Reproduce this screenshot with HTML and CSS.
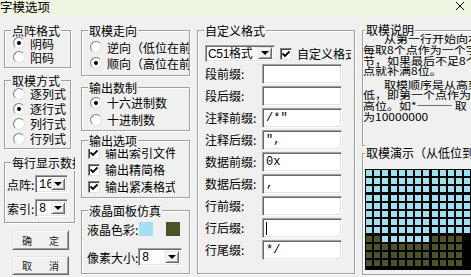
FILE: index.html
```html
<!DOCTYPE html>
<html lang="zh-CN">
<head>
  <meta charset="UTF-8" />
  <title>字模选项</title>
  <link rel="stylesheet" href="styles.css">
</head>
<body>

<div class="titlebar">
  <span class="title">字模选项</span>
  <svg class="close" width="8" height="8" viewBox="0 0 8 8">
    <path d="M0 0 L8 8 M8 0 L0 8" stroke="#000" stroke-width="1"/>
  </svg>
</div>

<div class="dialog">

  <!-- Column 1 -->
  <div class="col col-1">
    <div class="grp grp-dot">
      <span class="grp-title">点阵格式</span>
      <div class="opts">
        <div class="opt"><span class="radio on"></span>阴码</div>
        <div class="opt"><span class="radio"></span>阳码</div>
      </div>
    </div>

    <div class="grp grp-scan">
      <span class="grp-title">取模方式</span>
      <div class="opts">
        <div class="opt"><span class="radio"></span>逐列式</div>
        <div class="opt"><span class="radio on"></span>逐行式</div>
        <div class="opt"><span class="radio"></span>列行式</div>
        <div class="opt"><span class="radio"></span>行列式</div>
      </div>
    </div>

    <div class="grp grp-perline">
      <span class="grp-title">每行显示数据</span>
      <div class="pick-row">
        <span class="pick-label">点阵:</span>
        <div class="combo combo-small"><span class="combo-val">16</span><span class="combo-btn"><span class="arrow"></span></span></div>
      </div>
      <div class="pick-row">
        <span class="pick-label">索引:</span>
        <div class="combo combo-small"><span class="combo-val">8</span><span class="combo-btn"><span class="arrow"></span></span></div>
      </div>
    </div>

    <button class="btn btn-ok"><span>确</span><span>定</span></button>
    <button class="btn btn-cancel"><span>取</span><span>消</span></button>
  </div>

  <!-- Column 2 -->
  <div class="col col-2">
    <div class="grp grp-dir">
      <span class="grp-title">取模走向</span>
      <div class="opts">
        <div class="opt"><span class="radio"></span>逆向（低位在前）</div>
        <div class="opt"><span class="radio on"></span>顺向（高位在前）</div>
      </div>
    </div>

    <div class="grp grp-radix">
      <span class="grp-title">输出数制</span>
      <div class="opts">
        <div class="opt"><span class="radio on"></span>十六进制数</div>
        <div class="opt"><span class="radio"></span>十进制数</div>
      </div>
    </div>

    <div class="grp grp-out">
      <span class="grp-title">输出选项</span>
      <div class="opts">
        <div class="opt"><span class="check"><svg width="8" height="8" viewBox="0 0 8 8"><path d="M0.5 3.5 L3 6 L7.5 1.5" fill="none" stroke="#000" stroke-width="1.8"/></svg></span>输出索引文件</div>
        <div class="opt"><span class="check"><svg width="8" height="8" viewBox="0 0 8 8"><path d="M0.5 3.5 L3 6 L7.5 1.5" fill="none" stroke="#000" stroke-width="1.8"/></svg></span>输出精简格</div>
        <div class="opt"><span class="check"><svg width="8" height="8" viewBox="0 0 8 8"><path d="M0.5 3.5 L3 6 L7.5 1.5" fill="none" stroke="#000" stroke-width="1.8"/></svg></span>输出紧凑格式</div>
      </div>
    </div>

    <div class="grp grp-lcd">
      <span class="grp-title">液晶面板仿真</span>
      <div class="lcd-row lcd-colors">
        <span class="lcd-label">液晶色彩:</span>
        <span class="swatch swatch-on"></span>
        <span class="swatch swatch-off"></span>
      </div>
      <div class="lcd-row lcd-size">
        <span class="lcd-label">像素大小:</span>
        <div class="combo combo-size"><span class="combo-val">8</span><span class="combo-btn"><span class="arrow"></span></span></div>
      </div>
    </div>
  </div>

  <!-- Column 3 -->
  <div class="col col-3">
    <div class="grp grp-fmt">
      <span class="grp-title">自定义格式</span>
      <div class="fmt-top">
        <div class="combo combo-fmt"><span class="combo-val">C51格式</span><span class="combo-btn"><span class="arrow"></span></span></div>
        <div class="fmt-check"><span class="check"><svg width="8" height="8" viewBox="0 0 8 8"><path d="M0.5 3.5 L3 6 L7.5 1.5" fill="none" stroke="#000" stroke-width="1.8"/></svg></span>自定义格式</div>
      </div>
      <div class="fmt-row"><span class="fmt-label">段前缀:</span><span class="field"></span></div>
      <div class="fmt-row"><span class="fmt-label">段后缀:</span><span class="field"></span></div>
      <div class="fmt-row"><span class="fmt-label">注释前缀:</span><span class="field">/*"</span></div>
      <div class="fmt-row"><span class="fmt-label">注释后缀:</span><span class="field">",</span></div>
      <div class="fmt-row"><span class="fmt-label">数据前缀:</span><span class="field">0x</span></div>
      <div class="fmt-row"><span class="fmt-label">数据后缀:</span><span class="field">,</span></div>
      <div class="fmt-row"><span class="fmt-label">行前缀:</span><span class="field"></span></div>
      <div class="fmt-row"><span class="fmt-label">行后缀:</span><span class="field"><span class="caret"></span></span></div>
      <div class="fmt-row"><span class="fmt-label">行尾缀:</span><span class="field">*/</span></div>
    </div>
  </div>

  <!-- Column 4 -->
  <div class="col col-4">
    <div class="grp grp-desc">
      <span class="grp-title">取模说明</span>
      <div class="desc">
        <p>从第一行开始向右<br>每取8个点作为一个字<br>节，如果最后不足8个<br>点就补满8位。</p>
        <p>取模顺序是从高到<br>低，即第一个点作为最<br>高位。如*<span class="dash">———</span>取<br>为10000000</p>
      </div>
    </div>

    <div class="grp grp-demo">
      <span class="grp-title">取模演示（从低位到高位）</span>
      <div class="lcd" id="lcd-grid"></div>
    </div>
  </div>

</div>

<script>
  // Build the LCD preview grid from a row pattern
  // b = lit pixel, d = dark pixel, k = outside the panel
  const pattern = [];
  for (let i = 0; i < 8; i++) pattern.push("bbbbbbbbbbbbb");
  pattern.push("ddbbbbbbddddk");
  for (let i = 0; i < 3; i++) pattern.push("ddddddddddddk");

  const grid = document.getElementById("lcd-grid");
  const kinds = { b: "on", d: "off", k: "none" };

  pattern.forEach(row => {
    [...row].forEach(ch => {
      const cell = document.createElement("span");
      cell.className = "cell " + kinds[ch];
      grid.appendChild(cell);
    });
  });
</script>

</body>
</html>
```

FILE: styles.css
```css
/* Reset */
* {
  box-sizing: border-box;
  margin: 0;
  padding: 0;
}

body {
  font-family: "Noto Sans CJK SC", "Noto Sans", sans-serif;
  font-size: 12px;
  color: #000;
  background-color: #f0f0f0;
  width: 471px;
  height: 277px;
  overflow: hidden;
}

/* Title bar */
.titlebar {
  height: 17px;
  background-color: #eef5e2;
  display: flex;
  justify-content: space-between;
  align-items: flex-start;
}

.titlebar .title {
  font-size: 12.5px;
  line-height: 14px;
}

.titlebar .close {
  margin: 2px 7px 0 0;
}

/* Layout */
.dialog {
  display: flex;
  align-items: flex-start;
  padding: 13px 0 0 4px;
}

.col {
  display: flex;
  flex-direction: column;
  align-items: flex-start;
  flex: none;
}

.col-1 {
  width: 71px;
}

.col-2 {
  width: 109px;
  margin-left: 6px;
}

.col-3 {
  width: 158px;
  margin-left: 7px;
}

.col-4 {
  width: 130px;
  margin-left: 7px;
}

/* Group boxes (etched frame) */
.grp {
  position: relative;
  flex: none;
  border: 1px solid #a0a0a0;
  box-shadow: inset 1px 1px 0 #fff, 1px 1px 0 #fff;
}

.grp-title {
  position: absolute;
  top: -8px;
  left: 6px;
  padding: 0 1px;
  line-height: 16px;
  background-color: #f0f0f0;
  white-space: nowrap;
}

.opts {
  overflow: hidden;
}

.opt {
  display: flex;
  align-items: center;
  gap: 5px;
  white-space: nowrap;
}

/* Radio and check boxes */
.radio {
  position: relative;
  flex: none;
  width: 12px;
  height: 12px;
  border-radius: 50%;
  border: 1px solid;
  border-color: #808080 #e3e3e3 #e3e3e3 #808080;
  background-color: #fff;
}

.radio.on::after {
  content: "";
  position: absolute;
  left: 3px;
  top: 3px;
  width: 4px;
  height: 4px;
  border-radius: 50%;
  background-color: #000;
}

.check {
  flex: none;
  display: flex;
  align-items: center;
  justify-content: center;
  width: 12px;
  height: 12px;
  border: 1px solid;
  border-color: #808080 #e3e3e3 #e3e3e3 #808080;
  box-shadow: inset 1px 1px 0 #404040;
  background-color: #fff;
}

/* Column 1 groups */
.grp-dot {
  width: 67px;
  height: 38px;
  padding: 5px 0 0 8px;
}

.grp-dot .opt {
  height: 14px;
}

.grp-scan {
  width: 67px;
  height: 69px;
  margin-top: 12px;
  padding: 5px 0 0 8px;
}

.grp-scan .opt {
  height: 15px;
}

.grp-perline {
  width: 71px;
  height: 61px;
  margin-top: 13px;
  padding: 12px 0 0 2px;
}

.grp-perline .grp-title {
  max-width: 64px;
  overflow: hidden;
}

.pick-row {
  display: flex;
  align-items: center;
  height: 18px;
}

.pick-row + .pick-row {
  margin-top: 6px;
}

.pick-label {
  width: 28px;
  white-space: nowrap;
}

/* Combo boxes */
.combo {
  display: flex;
  height: 18px;
  border: 1px solid;
  border-color: #a0a0a0 #fff #fff #a0a0a0;
  box-shadow: inset 1px 1px 0 #696969, inset -1px -1px 0 #e3e3e3;
  background-color: #fff;
  padding: 2px;
}

.combo-val {
  flex: 1;
  font-family: "Liberation Mono", monospace;
  font-size: 12px;
  line-height: 14px;
  padding-left: 1px;
  white-space: nowrap;
  overflow: hidden;
}

.combo-fmt .combo-val {
  font-family: "Liberation Sans", "Noto Sans CJK SC", sans-serif;
  letter-spacing: -0.3px;
  padding-left: 1px;
}

.combo-btn {
  flex: none;
  width: 14px;
  display: flex;
  align-items: center;
  justify-content: center;
  background-color: #f0f0f0;
  border: 1px solid;
  border-color: #e3e3e3 #696969 #696969 #e3e3e3;
  box-shadow: inset 1px 1px 0 #fff, inset -1px -1px 0 #a0a0a0;
}

.arrow {
  width: 0;
  height: 0;
  border-left: 4px solid transparent;
  border-right: 4px solid transparent;
  border-top: 4px solid #000;
}

.combo-small {
  width: 33px;
}

.combo-size {
  width: 44px;
}

.combo-fmt {
  width: 70px;
  height: 17px;
  padding: 1px 2px 2px 1px;
}

/* Buttons */
.btn {
  display: flex;
  justify-content: center;
  align-items: center;
  gap: 17px;
  width: 57px;
  margin-left: 8px;
  font-family: "Noto Sans CJK SC", sans-serif;
  font-size: 10px;
  color: #222;
  background-color: #f0f0f0;
  border: 1px solid;
  border-color: #e3e3e3 #696969 #696969 #e3e3e3;
  box-shadow: inset 1px 1px 0 #fff, inset -1px -1px 0 #a0a0a0;
}

.btn-ok {
  height: 20px;
  margin-top: 7px;
}

.btn-cancel {
  height: 19px;
  margin-top: 6px;
}

/* Column 2 groups */
.grp-dir {
  width: 109px;
  height: 46px;
  padding: 8px 0 0 8px;
}

.grp-dir .opt {
  height: 16px;
}

.grp-radix {
  width: 109px;
  height: 44px;
  margin-top: 11px;
  padding: 6px 0 0 8px;
}

.grp-radix .opt {
  height: 17px;
}

.grp-out {
  width: 109px;
  height: 58px;
  margin-top: 9px;
  padding: 3px 0 0 6px;
}

.grp-out .opts {
  width: 87px;
}

.grp-out .opt {
  height: 17px;
}

.grp-lcd {
  width: 109px;
  height: 64px;
  margin-top: 12px;
  padding: 10px 0 0 5px;
}

.lcd-row {
  display: flex;
  align-items: center;
}

.lcd-colors {
  height: 16px;
}

.lcd-size {
  height: 18px;
  margin-top: 11px;
}

.lcd-label {
  width: 51px;
  white-space: nowrap;
}

.swatch {
  width: 14px;
  height: 14px;
}

.swatch-on {
  margin-left: 1px;
  background-color: #a0e0f0;
}

.swatch-off {
  margin-left: 13px;
  background-color: #4d5229;
}

/* Column 3: custom format */
.grp-fmt {
  width: 158px;
  height: 244px;
  padding: 14px 0 0 7px;
}

.fmt-top {
  display: flex;
  align-items: center;
  height: 17px;
}

.fmt-check {
  display: flex;
  align-items: center;
  gap: 5px;
  width: 71px;
  margin-left: 5px;
  white-space: nowrap;
  overflow: hidden;
}

.fmt-row {
  display: flex;
  align-items: center;
  height: 20px;
  margin-top: 2px;
}

.fmt-label {
  width: 57px;
  white-space: nowrap;
  margin-top: -2px;
}

.field {
  display: block;
  width: 80px;
  height: 20px;
  padding: 2px 3px;
  border: 1px solid;
  border-color: #a0a0a0 #fff #fff #a0a0a0;
  box-shadow: inset 1px 1px 0 #696969, inset -1px -1px 0 #e3e3e3;
  background-color: #fff;
  font-family: "Liberation Mono", monospace;
  font-size: 12px;
  line-height: 15px;
  white-space: nowrap;
}

.caret {
  display: inline-block;
  width: 1px;
  height: 13px;
  margin-top: 1px;
  background-color: #000;
  vertical-align: top;
}

/* Column 4: description and demo */
.grp-desc {
  width: 130px;
  height: 116px;
  padding: 3px 0 0 0;
}

.grp-desc .grp-title,
.grp-demo .grp-title {
  left: 2px;
  top: -9px;
}

.desc {
  transform: scaleY(0.86);
  transform-origin: left top;
}

.desc p {
  line-height: 12.3px;
  white-space: nowrap;
  text-indent: 21px;
}

.desc p + p {
  margin-top: 3.5px;
}

.dash {
  letter-spacing: 2px;
}

.grp-demo {
  width: 130px;
  height: 122px;
  margin-top: 7px;
  padding: 15px 0 0 2px;
}

.lcd {
  display: grid;
  grid-template-columns: repeat(13, 6px);
  grid-auto-rows: 6px;
  gap: 2.2px;
  width: 112px;
  height: 101px;
  padding: 1px 0 0 1px;
  background-color: #000;
  overflow: hidden;
}

.cell.on {
  background-color: #a0e0f0;
}

.cell.off {
  background-color: #4d5229;
}
```
